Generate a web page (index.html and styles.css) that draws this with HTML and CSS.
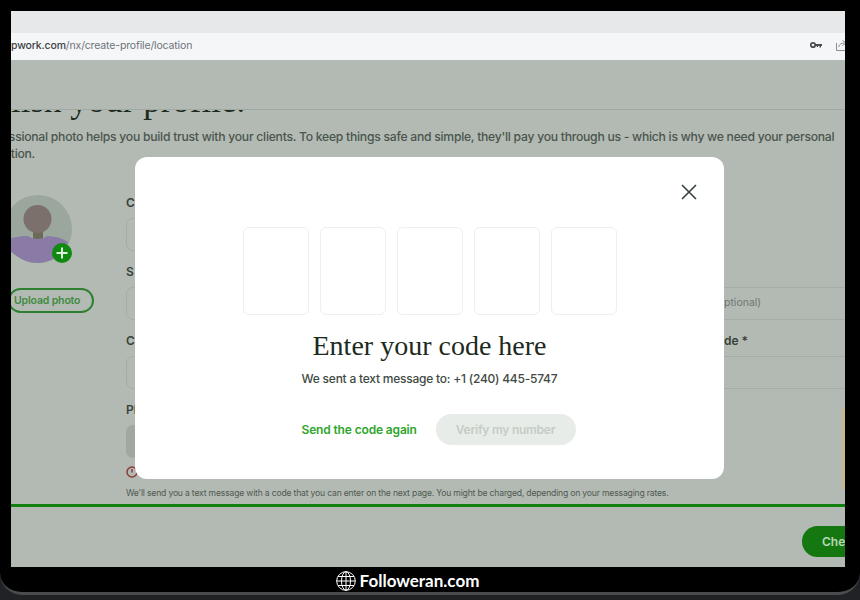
FILE: index.html
```html
<!DOCTYPE html>
<html lang="en">
<head>
  <meta charset="UTF-8" />
  <title>Enter your code</title>
  <link rel="stylesheet" href="styles.css">
</head>
<body>

<div class="laptop">
  <div class="screen">

    <!-- Browser bar -->
    <div class="tabs"></div>
    <div class="address">
      <span class="url"><b>pwork.com</b>/nx/create-profile/location</span>
      <svg class="key" width="12" height="8" viewBox="0 0 12 8">
        <circle cx="3" cy="4" r="2.2" fill="none" stroke="#4c4c4c" stroke-width="1.8"/>
        <path d="M5 3h7v2h-1v1.5h-1.5V5H8v1H6.8V5H5z" fill="#4c4c4c"/>
      </svg>
      <svg class="share" width="11" height="12" viewBox="0 0 11 12">
        <path d="M.5 4v7.5H11M2.5 8c1-3 3-4 6-4M6.500 1.500 10 4 6.500 6.500" fill="none" stroke="#8c8c8c"/>
      </svg>
    </div>

    <!-- Page behind the dialog -->
    <div class="page">
      <div class="page-top"></div>
      <div class="content">
        <h1 class="title">Polish your profile.</h1>
        <p class="intro">A professional photo helps you build trust with your clients. To keep things safe and simple, they'll pay you through us - which is why we need your personal information.</p>

        <div class="form">
          <div class="photo-col">
            <div class="avatar">
              <svg width="68" height="68" viewBox="0 0 68 68">
                <circle cx="34" cy="34" r="34" fill="#9ba79c"/>
                <path d="M29 36h10v10H29z" fill="#6d6a55"/>
                <circle cx="33.500" cy="24" r="14" fill="#7b706c"/>
                <path d="M0 46c8-4 18-5 24-5 5 4 14 4 19 0 8 0 15 2 21 6-4 12-17 21-30 21S6 60 0 46z" fill="#8a7aa6"/>
              </svg>
              <span class="plus">
                <svg width="20" height="20" viewBox="0 0 20 20">
                  <circle cx="10" cy="10" r="10" fill="#118a12"/>
                  <path d="M10 4.500v11M4.500 10h11" stroke="#dff0df" stroke-width="2"/>
                </svg>
              </span>
            </div>
            <div class="upload">Upload photo</div>
          </div>

          <div class="fields">
            <label class="label">C</label>
            <div class="input short"></div>

            <div class="two">
              <div class="col">
                <label class="label">S</label>
                <div class="input"></div>
              </div>
              <div class="col side">
                <label class="label">&nbsp;</label>
                <div class="input"><span class="hint">ptional)</span></div>
              </div>
            </div>

            <div class="two">
              <div class="col">
                <label class="label">C</label>
                <div class="input"></div>
              </div>
              <div class="col side">
                <label class="label">de *</label>
                <div class="input"></div>
              </div>
            </div>

            <label class="label">Ph</label>
            <div class="input phone"></div>
            <svg class="alert" width="12" height="12" viewBox="0 0 12 12">
              <circle cx="6" cy="6" r="5" fill="none" stroke="#8c3a36" stroke-width="1.500"/>
              <path d="M6 3v3.500" stroke="#8c3a36" stroke-width="1.500"/>
            </svg>
            <p class="note">We'll send you a text message with a code that you can enter on the next page. You might be charged, depending on your messaging rates.</p>
          </div>
        </div>
      </div>

      <div class="progress"></div>
      <div class="footer">
        <div class="next">Check</div>
      </div>
      <div class="edge"></div>

      <!-- Dialog -->
      <div class="modal">
        <svg class="close" width="16" height="16" viewBox="0 0 16 16">
          <path d="M1 1l14 14M15 1 1 15" stroke="#36423a" stroke-width="1.600" fill="none"/>
        </svg>
        <div class="code-boxes">
          <div class="code-box"></div>
          <div class="code-box"></div>
          <div class="code-box"></div>
          <div class="code-box"></div>
          <div class="code-box"></div>
        </div>
        <h2 class="modal-title">Enter your code here</h2>
        <p class="modal-text">We sent a text message to: +1 (240) 445-5747</p>
        <div class="actions">
          <span class="resend">Send the code again</span>
          <span class="verify">Verify my number</span>
        </div>
      </div>
    </div>
  </div>

  <!-- Watermark -->
  <div class="brand">
    <svg width="20" height="20" viewBox="0 0 20 20" fill="none" stroke="#fff" stroke-width="1">
      <circle cx="10" cy="10" r="9.300"/>
      <ellipse cx="10" cy="10" rx="4.500" ry="9.300"/>
      <path d="M10 .7v18.600M.7 10h18.600M2 5.500h16M2 14.500h16"/>
    </svg>
    <span>Followeran.com</span>
  </div>
</div>

</body>
</html>
```

FILE: styles.css
```css
body {
  margin: 0;
  height: 600px;
  overflow: hidden;
  background: #202226;
  font-family: Inter, "Liberation Sans", sans-serif;
}

.laptop {
  height: 595px;
  box-sizing: border-box;
  padding: 11px 15px 0 11px;
  background: #000;
  border-bottom: 3px solid #4a4b4c;
  border-radius: 0 0 22px 22px;
}

.screen {
  height: 556px;
  display: flex;
  flex-direction: column;
  overflow: hidden;
}

/* browser bar */
.tabs {
  height: 22px;
  background: #e7e8e9;
  border-bottom: 1px solid #f6f6f7;
}

.address {
  height: 26px;
  box-sizing: border-box;
  padding-bottom: 4px;
  display: flex;
  align-items: center;
  background: #f5f6f8;
  font-size: 10.5px;
  letter-spacing: -0.15px;
  color: #6d7378;
}

.url {
  flex: 1;
}

.url b {
  font-weight: 500;
  color: #3d4347;
}

.key {
  margin-right: 14px;
}

.share {
  margin-right: -2px;
}

/* page */
.page {
  flex: 1;
  position: relative;
  overflow: hidden;
  background: #b2bab3;
  color: #3a443c;
}

.page-top {
  height: 50px;
  box-sizing: border-box;
  border-bottom: 1px solid #9fa8a1;
  position: relative;
  z-index: 1;
  background: #b2bab3;
}

.content {
  display: flow-root;
  height: 394px;
  margin-left: -7px;
}

.title {
  margin: -29px 0 0 -30px;
  font-family: "Liberation Serif", serif;
  font-size: 35px;
  font-weight: 400;
  line-height: 40px;
  color: #1d2a20;
}

.intro {
  width: 890px;
  margin: 7px 0 0 -36px;
  font-size: 12.2px;
  font-weight: 500;
  letter-spacing: -0.27px;
  line-height: 17px;
  color: #4b554d;
}

.form {
  display: flex;
  margin-top: 33px;
}

.photo-col {
  width: 122px;
  flex: none;
}

.avatar {
  position: relative;
  width: 68px;
  height: 68px;
}

.avatar svg {
  display: block;
}

.plus {
  position: absolute;
  right: 0;
  bottom: 0;
}

.upload {
  width: 86px;
  height: 25px;
  box-sizing: border-box;
  margin: 25px 0 0 4px;
  padding-left: 4px;
  border: 2px solid #2f7f31;
  border-radius: 13px;
  font-size: 10.5px;
  font-weight: 600;
  letter-spacing: -0.15px;
  line-height: 21px;
  color: #3f8a41;
  white-space: nowrap;
}

.fields {
  flex: 1;
  font-size: 12px;
}

.label {
  display: block;
  height: 16px;
  font-weight: 600;
  line-height: 16px;
  color: #38423a;
}

.input {
  height: 33px;
  margin-top: 7px;
  margin-bottom: 13px;
  border: 1px solid #a5ada6;
  border-radius: 7px;
  box-sizing: border-box;
}

.input.short {
  width: 200px;
}

.two {
  display: flex;
}

.col {
  width: 598px;
  flex: none;
}

.side {
  width: 200px;
}

.side .input {
  border-left: 0;
  border-right: 0;
  border-radius: 0;
}

.hint {
  font-size: 10.5px;
  line-height: 30px;
  color: #6e7870;
}

.phone {
  width: 200px;
  background: #a0a8a1;
  border: 0;
  margin-bottom: 8px;
}

.alert {
  display: block;
}

.note {
  margin: 9px 0 0;
  font-size: 8.6px;
  letter-spacing: -0.18px;
  line-height: 12px;
  color: #4f5951;
  white-space: nowrap;
}

.progress {
  height: 3px;
  background: #11800f;
}

.footer {
  height: 60px;
  display: flex;
  justify-content: flex-end;
  align-items: flex-start;
}

.next {
  width: 90px;
  height: 31px;
  margin: 19px -47px 0 0;
  padding-left: 20px;
  box-sizing: border-box;
  border-radius: 16px;
  background: #15770f;
  font-size: 12px;
  font-weight: 600;
  line-height: 31px;
  color: #b9d8b6;
}

.edge {
  position: absolute;
  right: 0;
  top: 348px;
  width: 3px;
  height: 82px;
  background: #c9b68d;
}

/* dialog */
.modal {
  position: absolute;
  left: 124px;
  top: 97px;
  z-index: 2;
  width: 589px;
  height: 322px;
  box-sizing: border-box;
  padding-top: 70px;
  display: flex;
  flex-direction: column;
  align-items: center;
  background: #fff;
  border-radius: 12px;
}

.close {
  position: absolute;
  top: 27px;
  right: 27px;
}

.code-boxes {
  display: flex;
  gap: 11px;
}

.code-box {
  width: 66px;
  height: 88px;
  box-sizing: border-box;
  border: 1px solid #eeeef0;
  border-radius: 6px;
}

.modal-title {
  margin: 14px 0 0;
  font-family: "Liberation Serif", serif;
  font-size: 28px;
  font-weight: 400;
  line-height: 34px;
  color: #1d2a20;
}

.modal-text {
  margin: 8px 0 0;
  font-size: 12px;
  font-weight: 500;
  letter-spacing: -0.23px;
  line-height: 16px;
  color: #414a43;
}

.actions {
  display: flex;
  align-items: center;
  gap: 19px;
  margin: 27px 0 0 18px;
  font-size: 12px;
  font-weight: 600;
  letter-spacing: -0.25px;
}

.resend {
  width: 115px;
  white-space: nowrap;
  letter-spacing: -0.15px;
  color: #2ea52c;
}

.verify {
  width: 140px;
  height: 31px;
  border-radius: 16px;
  background: #e8ece8;
  line-height: 31px;
  text-align: center;
  color: #c3cdc5;
}

/* watermark */
.brand {
  height: 25px;
  margin-top: 1px;
  display: flex;
  justify-content: center;
  align-items: center;
  gap: 4px;
  padding-right: 41px;
  font-family: Lato, sans-serif;
  font-size: 17px;
  font-weight: 700;
  color: #fff;
}
```
